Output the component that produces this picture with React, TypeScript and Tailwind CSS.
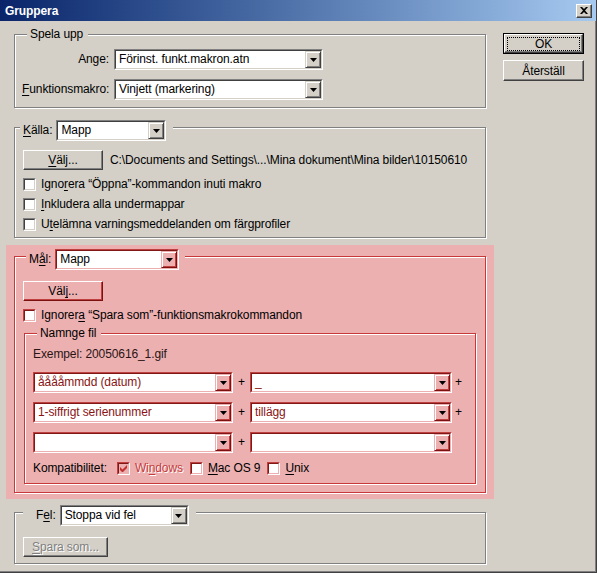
import { ReactNode } from "react";

type Tone = "gray" | "pink";

const Key = ({ children }: { children: ReactNode }) => (
  <span className="underline decoration-1 underline-offset-2">{children}</span>
);

const Arrow = () => (
  <svg width="7" height="4" viewBox="0 0 7 4" className="block">
    <polygon points="0,0 7,0 3.5,4" fill="#000" />
  </svg>
);

const Combo = ({
  value,
  className,
  tone = "gray",
  textClass = "text-black",
}: {
  value: string;
  className: string;
  tone?: Tone;
  textClass?: string;
}) => {
  const pink = tone === "pink";
  return (
    <div
      className={`h-[21px] shrink-0 border ${
        pink
          ? "border-t-[#c04040] border-l-[#c04040] border-r-white border-b-white"
          : "border-t-[#808080] border-l-[#808080] border-r-white border-b-white"
      } ${className}`}
    >
      <div
        className={`flex h-full border bg-white ${
          pink
            ? "border-t-[#801818] border-l-[#801818] border-r-[#ecb0b1] border-b-[#ecb0b1]"
            : "border-t-[#404040] border-l-[#404040] border-r-[#d4d0c8] border-b-[#d4d0c8]"
        }`}
      >
        <span className={`flex-1 overflow-hidden whitespace-nowrap pl-[3px] leading-[17px] ${textClass}`}>
          {value}
        </span>
        <div
          className={`flex h-full w-[16px] items-center justify-center border ${
            pink
              ? "bg-[#ecb0b1] border-t-[#ecb0b1] border-l-[#ecb0b1] border-r-[#7a1010] border-b-[#7a1010] shadow-[inset_1px_1px_0_#fff,inset_-1px_-1px_0_#c04040]"
              : "bg-[#d4d0c8] border-t-[#d4d0c8] border-l-[#d4d0c8] border-r-[#404040] border-b-[#404040] shadow-[inset_1px_1px_0_#fff,inset_-1px_-1px_0_#808080]"
          }`}
        >
          <Arrow />
        </div>
      </div>
    </div>
  );
};

const Button = ({
  children,
  className,
  tone = "gray",
  disabled,
}: {
  children: ReactNode;
  className: string;
  tone?: Tone;
  disabled?: boolean;
}) => (
  <div
    className={`flex shrink-0 items-center justify-center border border-t-white border-l-white ${
      tone === "pink"
        ? "bg-[#ecb0b1] border-r-[#7a1010] border-b-[#7a1010] shadow-[inset_-1px_-1px_0_#c04040]"
        : "bg-[#d4d0c8] border-r-[#404040] border-b-[#404040] shadow-[inset_-1px_-1px_0_#808080]"
    } ${disabled ? "text-[#808080] [text-shadow:1px_1px_0_#fff]" : "text-black"} ${className}`}
  >
    {children}
  </div>
);

const Check = ({ checked, tone = "gray" }: { checked?: boolean; tone?: Tone }) => {
  const pink = tone === "pink";
  return (
    <div
      className={`h-[13px] w-[13px] shrink-0 border ${
        pink
          ? "border-t-[#c04040] border-l-[#c04040] border-r-white border-b-white"
          : "border-t-[#808080] border-l-[#808080] border-r-white border-b-white"
      }`}
    >
      <div
        className={`flex h-full w-full items-center justify-center border ${
          pink
            ? "border-t-[#801818] border-l-[#801818] border-r-[#ecb0b1] border-b-[#ecb0b1]"
            : "border-t-[#404040] border-l-[#404040] border-r-[#d4d0c8] border-b-[#d4d0c8]"
        } ${checked ? "bg-[#ecb0b1]" : "bg-white"}`}
      >
        {checked && (
          <svg width="7" height="7" viewBox="0 0 7 7" className="block">
            <path d="M0 2v3l2 2h1l4-4V0L2.5 4.5z" fill="#c03030" />
          </svg>
        )}
      </div>
    </div>
  );
};

const CheckRow = ({ label, tone }: { label: ReactNode; tone?: Tone }) => (
  <div className="flex h-[20px] items-center gap-[5px]">
    <Check tone={tone} />
    <span className="whitespace-nowrap">{label}</span>
  </div>
);

// fieldset with an etched frame; the legend is kept 14px tall so the frame
// line passes through its upper half even when a combo hangs below it
const Group = ({
  legend,
  legendClass,
  tone = "gray",
  className,
  children,
}: {
  legend: ReactNode;
  legendClass: string;
  tone?: Tone;
  className: string;
  children: ReactNode;
}) => (
  <fieldset
    className={`m-0 min-w-0 border p-0 ${
      tone === "pink"
        ? "border-[#c83838] shadow-[inset_1px_1px_0_#fff,1px_1px_0_#fff]"
        : "border-[#808080] shadow-[inset_1px_1px_0_#fff,1px_1px_0_#fff]"
    } ${className}`}
  >
    <legend
      className={`h-[14px] p-0 leading-[14px] ${
        tone === "pink" ? "bg-[#ecb0b1]" : "bg-[#d4d0c8]"
      } ${legendClass}`}
    >
      {legend}
    </legend>
    {children}
  </fieldset>
);

const LegendCombo = ({
  label,
  value,
  comboClass,
  tone,
}: {
  label: ReactNode;
  value: string;
  comboClass: string;
  tone?: Tone;
}) => (
  <div className="flex items-start gap-[4px]">
    <span className="whitespace-nowrap leading-[21px]">{label}</span>
    <Combo value={value} className={comboClass} tone={tone} />
  </div>
);

const Plus = () => <span className="w-[17px] shrink-0 text-center leading-[21px]">+</span>;

export default function App() {
  return (
    <div className="h-[573px] w-[597px] overflow-hidden border-r border-b border-[#404040] bg-[#d4d0c8] font-['Liberation_Sans',Arial,sans-serif] text-[12px] tracking-[-0.1px] text-black shadow-[inset_-1px_-1px_0_#808080]">
      <div className="flex h-[21px] items-center justify-between bg-linear-to-r from-[#0a246a] to-[#a6caf0] pl-[5px] pr-[4px]">
        <span className="font-bold text-white">Gruppera</span>
        <div className="flex h-[14px] w-[16px] items-center justify-center border border-t-white border-l-white border-r-[#404040] border-b-[#404040] bg-[#d4d0c8] shadow-[inset_-1px_-1px_0_#808080]">
          <svg width="8" height="7" viewBox="0 0 8 7" className="block">
            <path d="M0 0h2l2 2 2-2h2L5 3.5 8 7H6L4 5 2 7H0l3-3.5z" fill="#000" />
          </svg>
        </div>
      </div>

      <div className="flex pl-[6px]">
        <div className="w-[488px] pt-[6px]">
          <Group
            className="mx-[8px]"
            legendClass="ml-[12px] pl-[3px] pr-[5px]"
            legend="Spela upp"
          >
            <div className="grid grid-cols-[87px_209px] gap-x-[5px] gap-y-[9px] pt-[8px] pb-[7px] pl-[7px]">
              <span className="text-right leading-[21px]">Ange:</span>
              <Combo value="Förinst. funkt.makron.atn" className="w-[209px]" />
              <span className="text-right leading-[21px]">
                <Key>F</Key>unktionsmakro:
              </span>
              <Combo value="Vinjett (markering)" className="w-[209px]" />
            </div>
          </Group>

          <Group
            className="mx-[8px] mt-[12px]"
            legendClass="ml-[5px] pl-[3px] pr-[7px]"
            legend={
              <LegendCombo
                label={
                  <>
                    <Key>K</Key>älla:
                  </>
                }
                value="Mapp"
                comboClass="w-[110px]"
              />
            }
          >
            <div className="pt-[16px] pb-[3px] pl-[8px]">
              <div className="flex items-center">
                <Button className="h-[20px] w-[80px]">
                  <span>
                    <Key>V</Key>älj...
                  </span>
                </Button>
                <span className="ml-[7px] whitespace-nowrap">
                  {"C:\\Documents and Settings\\...\\Mina dokument\\Mina bilder\\10150610"}
                </span>
              </div>
              <div className="mt-[4px]">
                <CheckRow
                  label={
                    <>
                      Igno<Key>r</Key>era “Öppna”-kommandon inuti makro
                    </>
                  }
                />
                <CheckRow
                  label={
                    <>
                      <Key>I</Key>nkludera alla undermappar
                    </>
                  }
                />
                <CheckRow
                  label={
                    <>
                      U<Key>t</Key>elämna varningsmeddelanden om färgprofiler
                    </>
                  }
                />
              </div>
            </div>
          </Group>

          <div className="mt-[7px] bg-[#ecb0b1] px-[8px] pt-[4px] pb-[6px]">
            <Group
              tone="pink"
              className=""
              legendClass="ml-[11px] pl-[3px] pr-[6px]"
              legend={
                <LegendCombo
                  label={
                    <>
                      M<Key>å</Key>l:
                    </>
                  }
                  value="Mapp"
                  comboClass="w-[124px]"
                  tone="pink"
                />
              }
            >
              <div className="pt-[18px] pb-[8px] pl-[8px]">
                <Button tone="pink" className="h-[20px] w-[80px]">
                  <span>
                    Väl<Key>j</Key>...
                  </span>
                </Button>
                <div className="mt-[4px]">
                  <CheckRow
                    tone="pink"
                    label={
                      <>
                        Ignorer<Key>a</Key> “Spara som”-funktionsmakrokommandon
                      </>
                    }
                  />
                </div>

                <Group
                  tone="pink"
                  className="mt-[1px] mr-[9px] ml-[1px]"
                  legendClass="ml-[12px] pl-[3px] pr-[5px]"
                  legend="Namnge fil"
                >
                  <div className="pt-[7px] pb-[5px] pl-[8px]">
                    <div className="h-[14px] leading-[14px] text-[#2a1414]">
                      Exempel: 20050616_1.gif
                    </div>
                    <div className="mt-[11px] flex flex-col gap-[9px]">
                      <div className="flex items-start">
                        <Combo tone="pink" textClass="text-[#8a1414]" value="ååååmmdd (datum)" className="w-[200px]" />
                        <Plus />
                        <Combo tone="pink" textClass="text-[#8a1414]" value="_" className="w-[202px]" />
                        <span className="ml-[3px] leading-[21px]">+</span>
                      </div>
                      <div className="flex items-start">
                        <Combo tone="pink" textClass="text-[#8a1414]" value="1-siffrigt serienummer" className="w-[200px]" />
                        <Plus />
                        <Combo tone="pink" textClass="text-[#8a1414]" value="tillägg" className="w-[202px]" />
                        <span className="ml-[3px] leading-[21px]">+</span>
                      </div>
                      <div className="flex items-start">
                        <Combo tone="pink" value="" className="w-[200px]" />
                        <Plus />
                        <Combo tone="pink" value="" className="w-[202px]" />
                      </div>
                    </div>
                    <div className="mt-[5px] flex h-[20px] items-center">
                      <span>Kompatibilitet:</span>
                      <div className="ml-[10px] flex items-center gap-[5px]">
                        <Check tone="pink" checked />
                        <span className="text-[#c43c3c] [text-shadow:1px_1px_0_#fff]">
                          Wi<Key>n</Key>dows
                        </span>
                      </div>
                      <div className="ml-[7px] flex items-center gap-[5px]">
                        <Check tone="pink" />
                        <span>
                          <Key>M</Key>ac OS 9
                        </span>
                      </div>
                      <div className="ml-[7px] flex items-center gap-[5px]">
                        <Check tone="pink" />
                        <span>
                          <Key>U</Key>nix
                        </span>
                      </div>
                    </div>
                  </div>
                </Group>
              </div>
            </Group>
          </div>

          <Group
            className="mx-[8px] mt-[6px]"
            legendClass="ml-[8px] pl-[13px] pr-[7px]"
            legend={
              <LegendCombo
                label={
                  <>
                    F<Key>e</Key>l:
                  </>
                }
                value="Stoppa vid fel"
                comboClass="w-[129px]"
              />
            }
          >
            <div className="pt-[18px] pb-[6px] pl-[8px]">
              <Button disabled className="h-[20px] w-[85px]">
                <span>
                  <Key>S</Key>para som...
                </span>
              </Button>
            </div>
          </Group>
        </div>

        <div className="ml-[9px] flex flex-col gap-[6px] pt-[12px]">
          <div className="h-[21px] w-[81px] border border-black">
            <Button className="h-full w-full">
              <span className="flex h-[14px] w-[73px] items-center justify-center border border-dotted border-black leading-none">
                OK
              </span>
            </Button>
          </div>
          <Button className="h-[21px] w-[81px]">Återställ</Button>
        </div>
      </div>
    </div>
  );
}
